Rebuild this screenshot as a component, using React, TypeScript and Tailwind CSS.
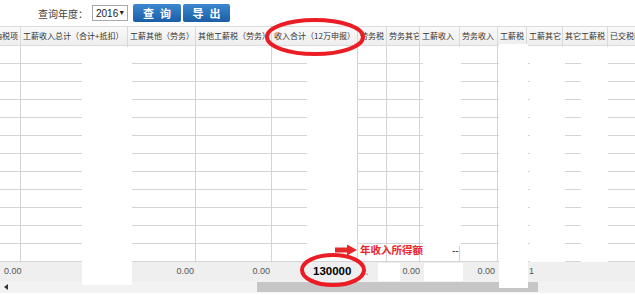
type Col = { title: string; w: string; end?: boolean };

const COLS: Col[] = [
  { title: "应纳税项", w: "w-[21px]", end: true },
  { title: "工薪收入总计（合计+抵扣）", w: "w-[107px]" },
  { title: "工薪其他（劳务）", w: "w-[68px]" },
  { title: "其他工薪税（劳务）", w: "w-[76px]" },
  { title: "收入合计（12万申报）", w: "w-[86px]" },
  { title: "劳务税", w: "w-[29px]", end: true },
  { title: "劳务其它", w: "w-[33px]" },
  { title: "工薪收入", w: "w-[40px]" },
  { title: "劳务收入", w: "w-[38px]" },
  { title: "工薪税", w: "w-[29px]" },
  { title: "工薪其它", w: "w-[36px]" },
  { title: "其它工薪税", w: "w-[45px]" },
  { title: "已交税额", w: "w-[33px]" },
];

// footer values per column, "" = empty
const TOTALS: { text: string; align: string; bold?: boolean }[] = [
  { text: "0.00", align: "justify-start pl-[4px]" },
  { text: "", align: "" },
  { text: "0.00", align: "justify-end pr-[2px]" },
  { text: "0.00", align: "justify-end pr-[2px]" },
  { text: "130000", align: "justify-start pl-[41px]", bold: true },
  { text: "、", align: "justify-start pl-[7px]" },
  { text: "0.00", align: "justify-end pr-0" },
  { text: "", align: "" },
  { text: "0.00", align: "justify-end pr-[3px]" },
  { text: "", align: "" },
  { text: "1", align: "justify-start pl-[2px]" },
  { text: "", align: "" },
  { text: "", align: "" },
];

const ROWS = Array.from({ length: 12 }, (_, i) => i);

const CJK = "font-['Noto_Sans_CJK_SC','Noto_Sans',sans-serif]";

export default function App() {
  return (
    <div className="relative h-[295px] w-[635px] overflow-hidden bg-white">
      {/* 查询栏 */}
      <div className={`flex h-[26px] items-center pl-[38px] text-[10px] text-[#444] ${CJK}`}>
        <span>查询年度：</span>
        <div className="ml-[4px] flex h-[16px] w-[36px] items-center justify-between border border-[#a8a8a8] bg-white pl-[3px] pr-[3px] font-['Liberation_Sans',sans-serif] text-[10px] text-[#222]">
          <span>2016</span>
          <span className="text-[7px]">▼</span>
        </div>
        <button className="ml-[5px] flex h-[18px] w-[48px] items-center justify-center rounded-[2px] bg-gradient-to-b from-[#3c88cf] to-[#1a5ea6] text-[11px] font-bold tracking-[6px] text-white indent-[6px]">
          查询
        </button>
        <button className="ml-[2px] flex h-[18px] w-[47px] items-center justify-center rounded-[2px] bg-gradient-to-b from-[#3c88cf] to-[#1a5ea6] text-[11px] font-bold tracking-[6px] text-white indent-[6px]">
          导出
        </button>
      </div>

      {/* 表格 */}
      <div className="relative">
        <div className="flex h-[20px] border-y border-[#dcdcdc] bg-gradient-to-b from-[#fafafa] to-[#eeeeee]">
          {COLS.map((c) => (
            <div
              key={c.title}
              className={`${c.w} flex shrink-0 items-center overflow-hidden whitespace-nowrap border-r border-[#d8d8d8] px-[2px] text-[8px] text-[#333] ${CJK} ${c.end ? "justify-end" : "justify-start"}`}
            >
              {c.title}
            </div>
          ))}
        </div>

        {ROWS.map((r) => (
          <div key={r} className="flex h-[18px]">
            {COLS.map((c) => (
              <div key={c.title} className={`${c.w} shrink-0 border-b border-r border-[#d4d4d4]`} />
            ))}
          </div>
        ))}

        <div className="flex h-[19px] bg-[#efefef]">
          {COLS.map((c, i) => (
            <div
              key={c.title}
              className={`${c.w} flex shrink-0 items-center whitespace-nowrap ${TOTALS[i].align} ${
                TOTALS[i].bold
                  ? "font-['Liberation_Sans',sans-serif] text-[11.5px] font-bold text-black"
                  : "font-['Liberation_Sans',sans-serif] text-[9px] text-[#555]"
              }`}
            >
              {TOTALS[i].text}
            </div>
          ))}
        </div>

        {/* 滚动条 */}
        <div className="relative flex h-[12px] items-center bg-[#f2f2f2]">
          <span className="ml-[4px] h-0 w-0 border-y-[3px] border-r-[4px] border-y-transparent border-r-[#333]" />
          <div className="absolute left-[257px] top-[1px] h-[10px] w-[281px] bg-[#c6c6c6]" />
        </div>

        {/* 被遮盖的区域 */}
        <div className="absolute left-[82px] top-[21px] h-[238px] w-[50px] bg-white" />
        <div className="absolute left-[307px] top-[21px] h-[199px] w-[50px] bg-white" />
        <div className="absolute left-[423px] top-[21px] h-[199px] w-[38px] bg-white" />
        <div className="absolute left-[499px] top-[18px] h-[244px] w-[29px] bg-white" />
        <div className="absolute left-[530px] top-[21px] h-[215px] w-[35px] bg-white" />
        <div className="absolute left-[581px] top-[21px] h-[215px] w-[27px] bg-white" />
        <div className="absolute left-[378px] top-[237px] h-[18px] w-[22px] bg-white" />
        <div className="absolute left-[424px] top-[237px] h-[18px] w-[39px] bg-white" />
      </div>

      {/* 标注 */}
      <div className="absolute left-[334px] top-[242px] flex items-center">
        <svg width="24" height="12" viewBox="0 0 24 12">
          <rect x="1" y="3.5" width="13" height="5" fill="#e5262b" />
          <path d="M13 0.5 L23 6 L13 11.5 Z" fill="#e5262b" />
        </svg>
        <span className={`ml-[2px] text-[10.5px] font-bold text-[#e8262b] ${CJK}`}>年收入所得额</span>
      </div>
      <span className="absolute left-[452px] top-[243px] font-['Liberation_Sans',sans-serif] text-[10px] text-[#333]">--</span>

      <svg className="pointer-events-none absolute inset-0" width="635" height="295">
        <ellipse cx="315" cy="37" rx="48" ry="17" fill="none" stroke="#ec1c24" strokeWidth="4" />
        <ellipse cx="333" cy="270" rx="31" ry="15" fill="none" stroke="#ec1c24" strokeWidth="4" />
      </svg>
    </div>
  );
}
